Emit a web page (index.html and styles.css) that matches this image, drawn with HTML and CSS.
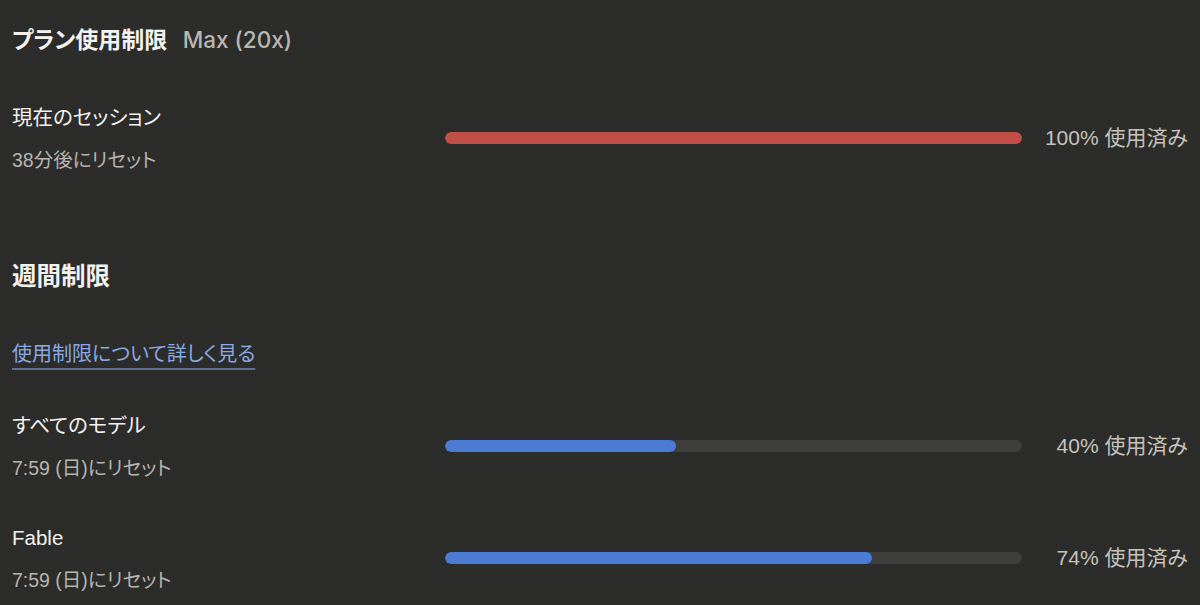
FILE: index.html
```html
<!DOCTYPE html>
<html lang="ja">
<head>
	<meta charset="UTF-8">
	<meta name="viewport" content="width=device-width, initial-scale=1">
	<title>プラン使用制限</title>
	<link rel="stylesheet" href="styles.css">
</head>
<body>
	<div class="usage">
		<h1 class="title">プラン使用制限 <span class="plan">Max (20x)</span></h1>

		<div class="row first-row">
			<div class="info">
				<div class="label">現在のセッション</div>
				<div class="sub">38分後にリセット</div>
			</div>
			<div class="track"><div class="fill red" style="width: 100%"></div></div>
			<div class="used">100% 使用済み</div>
		</div>

		<h2 class="heading">週間制限</h2>
		<a class="more" href="#">使用制限について詳しく見る</a>

		<div class="row">
			<div class="info">
				<div class="label">すべてのモデル</div>
				<div class="sub">7:59 (日)にリセット</div>
			</div>
			<div class="track"><div class="fill blue" style="width: 40%"></div></div>
			<div class="used">40% 使用済み</div>
		</div>

		<div class="row next-row">
			<div class="info">
				<div class="label">Fable</div>
				<div class="sub">7:59 (日)にリセット</div>
			</div>
			<div class="track"><div class="fill blue" style="width: 74%"></div></div>
			<div class="used">74% 使用済み</div>
		</div>
	</div>
</body>
</html>
```

FILE: styles.css
```css
body{
	margin: 0;
	background-color: #2c2c2b;
	color: #f3f2ee;
	font-family: "Liberation Sans", "Noto Sans CJK JP", sans-serif;
	font-feature-settings: "palt";
}
.usage{
	display: flex;
	flex-direction: column;
	align-items: flex-start;
	padding: 24px 12px 0 12px;
}
.title{
	margin: 0;
	font-size: 23px;
	line-height: 32px;
	font-weight: bold;
}
.plan{
	margin-left: 9px;
	font-family: "Inter", "Noto Sans CJK JP", sans-serif;
	font-weight: 500;
	font-size: 22.5px;
	color: #b9b7af;
}
.row{
	width: 100%;
	display: flex;
	align-items: center;
	margin-top: 44px;
}
.first-row{
	margin-top: 48px;
}
.next-row{
	margin-top: 42px;
}
.info{
	width: 433px;
	flex-shrink: 0;
}
.label{
	font-size: 20.5px;
	line-height: 28px;
}
.sub{
	margin-top: 14px;
	font-size: 19.5px;
	line-height: 28px;
	color: #b7b5ad;
}
.track{
	flex: 1;
	height: 12px;
	margin-bottom: 3px;
	border-radius: 6px;
	background-color: #3e3e3d;
	overflow: hidden;
}
.fill{
	height: 100%;
	border-radius: 6px;
}
.red{
	background-color: #c14f47;
}
.blue{
	background-color: #4b7bd5;
}
.used{
	width: 166px;
	flex-shrink: 0;
	margin-bottom: 6px;
	text-align: right;
	font-size: 21px;
	color: #c5c3bb;
}
.heading{
	margin: 87px 0 0 0;
	font-size: 24.5px;
	line-height: 32px;
	font-weight: bold;
}
.more{
	margin-top: 47px;
	font-size: 20px;
	line-height: 28px;
	color: #8aa9e2;
	text-decoration: underline;
	text-decoration-color: #5d6f93;
	text-underline-offset: 7px;
}
```
